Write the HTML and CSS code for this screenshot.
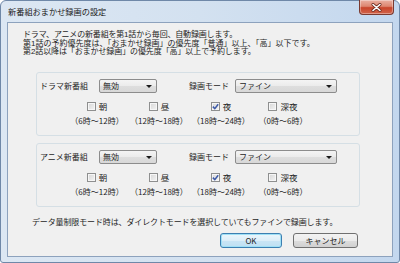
FILE: index.html
```html
<!DOCTYPE html>
<html lang="ja">
<head>
<meta charset="utf-8">
<link rel="stylesheet" href="styles.css">
</head>
<body>
<div class="window">
  <div class="titlebar">
    <span class="title">新番組おまかせ録画の設定</span>
    <div class="close">
      <svg width="11" height="9" viewBox="0 0 11 9"><path d="M2 1.5 L9 7.5 M9 1.5 L2 7.5" stroke="#6b2a1e" stroke-width="3" stroke-linecap="round"/><path d="M2 1.5 L9 7.5 M9 1.5 L2 7.5" stroke="#ffffff" stroke-width="1.6" stroke-linecap="round"/></svg>
    </div>
  </div>
  <div class="client">
    <div class="intro">
      <span class="line tight">ドラマ、アニメの新番組を第1話から毎回、自動録画します。</span>
      <span class="line">第1話の予約優先度は、「おまかせ録画」の優先度「普通」以上、「高」以下です。</span>
      <span class="line tight2">第2話以降は「おまかせ録画」の優先度「高」以上で予約します。</span>
    </div>

    <div class="group">
      <div class="row-top">
        <span class="lbl">ドラマ新番組</span>
        <div class="combo narrow"><span>無効</span><i class="arrow"></i></div>
        <span class="lbl2">録画モード</span>
        <div class="combo wide"><span>ファイン</span><i class="arrow"></i></div>
      </div>
      <div class="slots">
        <div class="slot"><div class="cb"><span class="box"></span>朝</div><span class="time">（6時〜12時）</span></div>
        <div class="slot"><div class="cb"><span class="box"></span>昼</div><span class="time">（12時〜18時）</span></div>
        <div class="slot"><div class="cb"><span class="box checked"><svg width="7" height="7" viewBox="0 0 7 7"><path d="M0.8 3.6 L2.8 5.6 L6.2 1.2" fill="none" stroke="#3d5aa8" stroke-width="1.5"/></svg></span>夜</div><span class="time">（18時〜24時）</span></div>
        <div class="slot"><div class="cb"><span class="box"></span>深夜</div><span class="time">（0時〜6時）</span></div>
      </div>
    </div>

    <div class="group second">
      <div class="row-top">
        <span class="lbl">アニメ新番組</span>
        <div class="combo narrow"><span>無効</span><i class="arrow"></i></div>
        <span class="lbl2">録画モード</span>
        <div class="combo wide"><span>ファイン</span><i class="arrow"></i></div>
      </div>
      <div class="slots">
        <div class="slot"><div class="cb"><span class="box"></span>朝</div><span class="time">（6時〜12時）</span></div>
        <div class="slot"><div class="cb"><span class="box"></span>昼</div><span class="time">（12時〜18時）</span></div>
        <div class="slot"><div class="cb"><span class="box checked"><svg width="7" height="7" viewBox="0 0 7 7"><path d="M0.8 3.6 L2.8 5.6 L6.2 1.2" fill="none" stroke="#3d5aa8" stroke-width="1.5"/></svg></span>夜</div><span class="time">（18時〜24時）</span></div>
        <div class="slot"><div class="cb"><span class="box"></span>深夜</div><span class="time">（0時〜6時）</span></div>
      </div>
    </div>

    <p class="note">データ量制限モード時は、ダイレクトモードを選択していてもファインで録画します。</p>
    <div class="buttons">
      <button class="btn default">OK</button>
      <button class="btn cancel">キャンセル</button>
    </div>
  </div>
</div>
</body>
</html>
```
FILE: styles.css
```css
html, body {
  margin: 0;
  padding: 0;
  width: 400px;
  height: 263px;
  overflow: hidden;
  background: #ffffff;
}
body {
  font-family: "Noto Sans CJK JP", "Noto Sans", sans-serif;
  font-size: 8px;
  color: #1e1e1e;
}
.window {
  box-sizing: border-box;
  width: 400px;
  height: 263px;
  border: 1px solid #6f88a8;
  border-radius: 6px 6px 3px 3px;
  background: linear-gradient(to right, #dce7f3 0%, #d3e1f0 50%, #c3d7ee 100%);
  padding: 0 6px 5px 6px;
  display: flex;
  flex-direction: column;
}
.titlebar {
  height: 21px;
  display: flex;
  justify-content: space-between;
  align-items: flex-start;
}
.title {
  padding-top: 6px;
  padding-left: 1px;
  line-height: 9px;
  font-size: 8.2px;
  color: #1a1a1a;
}
.close {
  margin-top: -1px;
  margin-right: -1px;
  width: 35px;
  height: 15px;
  box-sizing: border-box;
  border: 1px solid #7a3a30;
  border-top: none;
  border-radius: 0 0 4px 4px;
  background: linear-gradient(to bottom, #eab0a2 0%, #dd8670 45%, #c8452b 55%, #d2644a 100%);
  display: flex;
  align-items: center;
  justify-content: center;
  box-shadow: inset 0 0 0 1px rgba(255,255,255,0.35);
}
.close svg { display: block; }
.client {
  flex: 1;
  background: #f0f0f0;
  border: 1px solid #8da2bd;
}
.intro {
  padding: 8px 0 0 15px;
  white-space: nowrap;
  font-family: "Liberation Sans", "Noto Sans CJK JP", sans-serif;
}
.line {
  display: block;
  height: 8.5px;
  line-height: 8.5px;
}
.tight { letter-spacing: -0.18px; }
.tight2 { letter-spacing: -0.1px; }
.group {
  box-sizing: border-box;
  margin: 15.5px 0 0 28px;
  width: 324px;
  height: 64px;
  border: 1px solid #d5dfe5;
  border-radius: 3px;
  padding-top: 6px;
}
.group.second {
  margin-top: 7px;
}
.row-top {
  display: flex;
  align-items: center;
  height: 14px;
  padding-left: 3px;
}
.lbl {
  width: 59px;
  line-height: 14px;
}
.lbl2 {
  margin-left: 32px;
  width: 46px;
  line-height: 14px;
}
.combo {
  box-sizing: border-box;
  height: 14px;
  border: 1px solid #8c8c8c;
  border-radius: 2px;
  background: linear-gradient(to bottom, #f4f4f4 0%, #ebebeb 50%, #dedede 51%, #d8d8d8 100%);
  display: flex;
  align-items: center;
  justify-content: space-between;
  padding: 0 4px 0 3px;
  line-height: 12px;
}
.combo.narrow { width: 58px; }
.combo.wide { width: 102px; }
.arrow {
  width: 0;
  height: 0;
  border-left: 3px solid transparent;
  border-right: 3px solid transparent;
  border-top: 3px solid #1a1a1a;
}
.slots {
  display: grid;
  grid-template-columns: repeat(4, 62px);
  margin-top: 8px;
  padding-left: 29px;
}
.slot {
  display: flex;
  flex-direction: column;
  align-items: center;
}
.cb {
  display: flex;
  align-items: center;
  height: 10px;
  line-height: 10px;
  font-size: 8.5px;
}
.box {
  box-sizing: border-box;
  width: 9px;
  height: 9px;
  border: 1px solid #8e8f8f;
  background: linear-gradient(135deg, #d6d6d6 0%, #f4f4f4 100%);
  box-shadow: inset 0 0 0 1px #f6f6f6;
  margin-right: 3px;
  display: flex;
  align-items: center;
  justify-content: center;
}
.box svg { display: block; }
.time {
  margin-top: 6px;
  line-height: 8px;
  font-size: 8px;
  white-space: nowrap;
}
.note {
  margin: 11px 0 0 24px;
  line-height: 8px;
  white-space: nowrap;
  letter-spacing: -0.13px;
}
.buttons {
  display: flex;
  justify-content: flex-end;
  gap: 11px;
  margin-top: 7px;
  padding-right: 34px;
}
.btn {
  box-sizing: border-box;
  height: 15px;
  padding: 0;
  font-family: inherit;
  font-size: 8px;
  line-height: 13px;
  color: #1e1e1e;
  border: 1px solid #707070;
  border-radius: 3px;
  background: linear-gradient(to bottom, #f3f3f3 0%, #ebebeb 50%, #dddddd 51%, #d0d0d0 100%);
}
.btn.default {
  width: 62px;
  border-color: #3c7fb1;
  box-shadow: inset 0 0 0 1px #9fe0f6;
  background: linear-gradient(to bottom, #ecf6fc 0%, #dceef8 50%, #c9e5f5 51%, #bfe0f3 100%);
}
.btn.cancel {
  width: 65px;
}
```
